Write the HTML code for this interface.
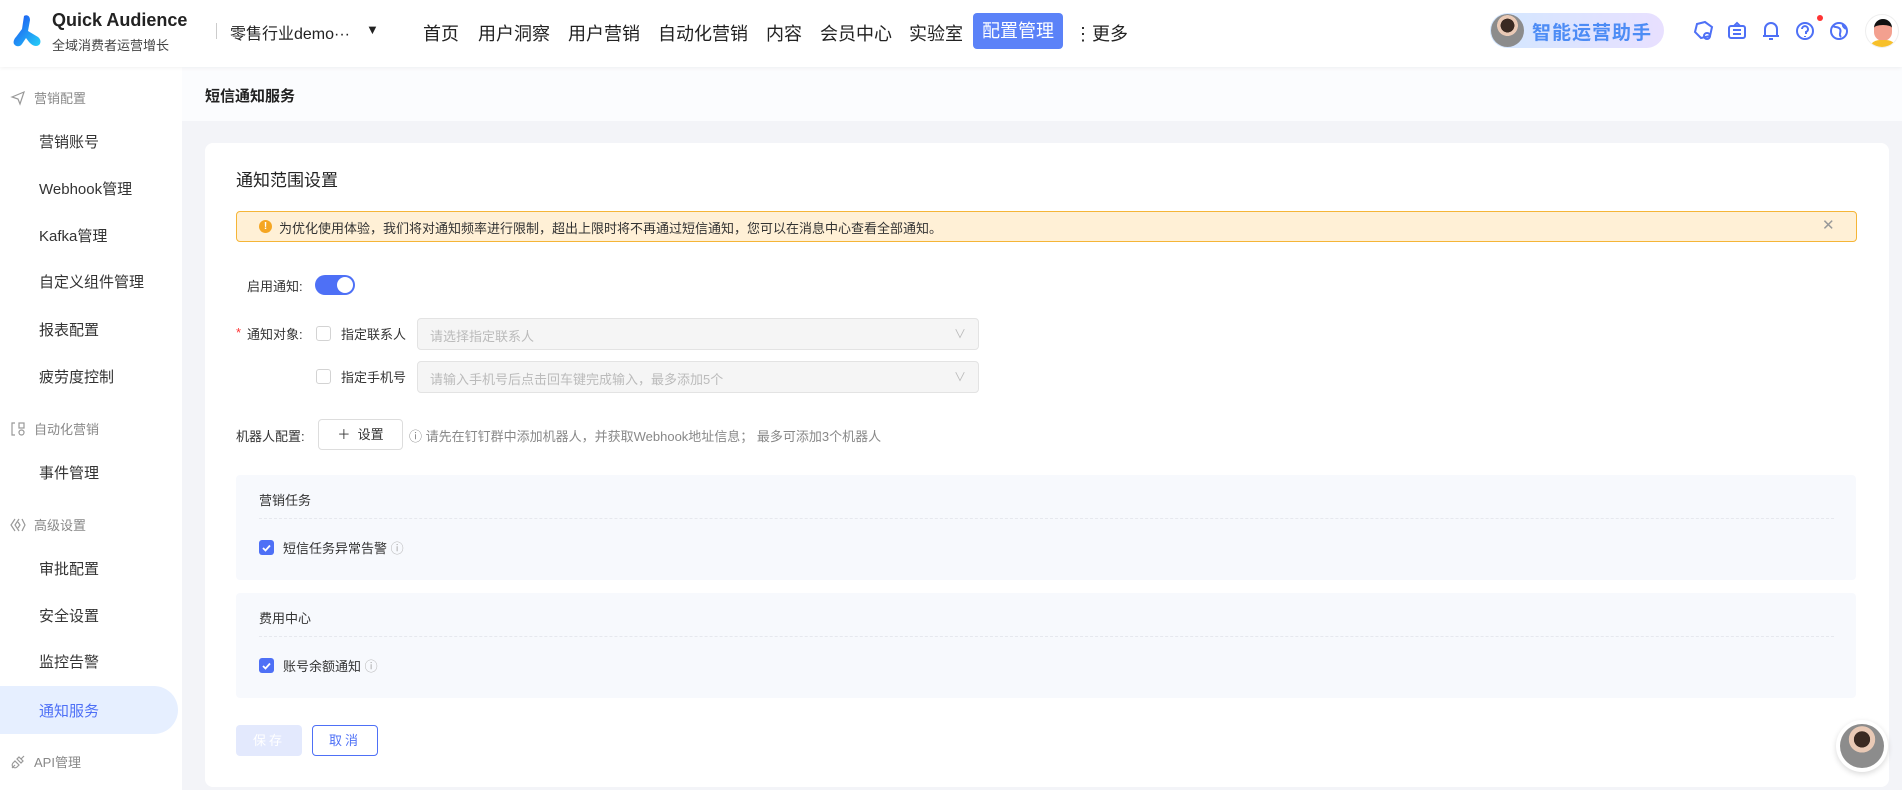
<!DOCTYPE html>
<html><head><meta charset="utf-8">
<style>
*{box-sizing:border-box;margin:0;padding:0}
body{width:1902px;height:790px;overflow:hidden;background:#f3f4f8;font-family:"Liberation Sans","Noto Sans CJK SC",sans-serif;color:#333;position:relative}
.abs{position:absolute}
.hdr{left:0;top:0;width:1902px;height:67px;background:#fff;box-shadow:0 1px 4px rgba(0,0,0,.06);z-index:2}
.nav{top:20px;font-size:18px;color:#222;white-space:nowrap}
.side{left:0;top:67px;width:182px;height:723px;background:#fff}
.grp{left:34px;font-size:13px;color:#888}
.gi{left:10px;width:16px;height:16px}
.it{left:39px;font-size:15px;color:#333}
.lbl{font-size:13px;color:#333}
.cb{width:15px;height:15px;border:1px solid #d3d3d3;border-radius:3px;background:#fff}
.cbon{width:15px;height:15px;border-radius:3px;background:#4e70f6}
.inp{left:417px;width:562px;height:32px;background:#f5f5f5;border:1px solid #e3e3e3;border-radius:4px;font-size:13px;color:#bbb;padding:7px 12px}
.inp span{position:absolute;right:12px;top:6px;color:#bbb;font-size:12px}
.sec{left:236px;width:1620px;height:105px;background:#f7f9fd;border-radius:4px}
</style></head><body>
<div class="abs hdr">
  <svg class="abs" style="left:10px;top:14px" width="33" height="33" viewBox="0 0 33 33"><defs><linearGradient id="g" x1="0" y1="0" x2="1" y2="1"><stop offset="0" stop-color="#1c4df2"/><stop offset="1" stop-color="#25d0f7"/></linearGradient></defs><path d="M14 2c3-2 6 0 6 4l-2 11 10 6c4 3 3 9-2 9-3 0-5-2-7-4l-3-4-4 6c-2 3-6 3-8 0-1-2 0-5 2-7l6-8z" fill="url(#g)"/></svg>
  <div class="abs" style="left:52px;top:10px;font-size:18px;font-weight:bold;color:#222">Quick Audience</div>
  <div class="abs" style="left:52px;top:35px;font-size:13px;color:#444">全域消费者运营增长</div>
  <div class="abs" style="left:216px;top:23px;width:1px;height:16px;background:#ccc"></div>
  <div class="abs" style="left:230px;top:20px;font-size:16px;color:#222">零售行业demo···</div>
  <div class="abs" style="left:366px;top:22px;font-size:13px;color:#222">▼</div>
  <div class="abs nav" style="left:423px">首页</div>
  <div class="abs nav" style="left:478px">用户洞察</div>
  <div class="abs nav" style="left:568px">用户营销</div>
  <div class="abs nav" style="left:658px">自动化营销</div>
  <div class="abs nav" style="left:766px">内容</div>
  <div class="abs nav" style="left:820px">会员中心</div>
  <div class="abs nav" style="left:909px">实验室</div>
  <div class="abs" style="left:973px;top:13px;width:90px;height:36px;background:#5b82f8;border-radius:4px;color:#fff;font-size:18px;text-align:center;line-height:36px">配置管理</div>
  <div class="abs nav" style="left:1074px">⋮更多</div>
  <div class="abs" style="left:1490px;top:13px;width:174px;height:35px;border-radius:18px;background:linear-gradient(90deg,#d3e7ff,#e8e0ff)"></div>
  <div class="abs" style="left:1491px;top:14px;width:33px;height:33px;border-radius:50%;background:radial-gradient(circle at 50% 35%,#3a2a22 0 25%,#e9c9b5 26% 38%,#8c8c8c 39% 100%)"></div>
  <div class="abs" style="left:1532px;top:18px;font-size:19px;font-weight:bold;color:#4d8cf5;letter-spacing:1px">智能运营助手</div>
  <svg class="abs" style="left:1693px;top:20px" width="170" height="22" viewBox="0 0 170 22" fill="none" stroke="#4e70f6" stroke-width="2">
    <path d="M4 4l8-2 7 5-2 9-9 2-6-6z"/><circle cx="14" cy="16" r="3"/>
    <rect x="36" y="6" width="16" height="12" rx="2"/><path d="M40 10h8M40 14h8M41 6l3-3 3 3"/>
    <path d="M72 16V9a6 6 0 0 1 12 0v7zM70 16h16M76 19h4"/>
    <circle cx="112" cy="11" r="8"/><path d="M109 9a3 3 0 1 1 4 3v2M112 16v1"/>
    <circle cx="146" cy="11" r="8"/><path d="M140 6c3 2 5 0 7 3s-2 5 1 8M150 4c-1 3 2 4 3 5"/>
  </svg>
  <div class="abs" style="left:1817px;top:15px;width:6px;height:6px;border-radius:50%;background:#f33"></div>
  <div class="abs" style="left:1865px;top:14px;width:34px;height:34px;border-radius:50%;overflow:hidden;background:#fff;border:1px solid #eee">
    <div class="abs" style="left:8px;top:4px;width:18px;height:22px;border-radius:9px;background:#f3a08f;border-top:6px solid #111"></div>
    <div class="abs" style="left:2px;top:25px;width:30px;height:14px;border-radius:12px 12px 0 0;background:#f7c02b"></div>
  </div>
</div>

<div class="abs side">
  <svg class="abs gi" style="top:23px" viewBox="0 0 16 16" fill="none" stroke="#999" stroke-width="1.2"><path d="M2 7l12-5-4 12-2-5z"/></svg>
  <div class="abs grp" style="top:21px">营销配置</div>
  <div class="abs it" style="top:64px">营销账号</div>
  <div class="abs it" style="top:111px">Webhook管理</div>
  <div class="abs it" style="top:158px">Kafka管理</div>
  <div class="abs it" style="top:204px">自定义组件管理</div>
  <div class="abs it" style="top:252px">报表配置</div>
  <div class="abs it" style="top:299px">疲劳度控制</div>
  <svg class="abs gi" style="top:354px" viewBox="0 0 16 16" fill="none" stroke="#999" stroke-width="1.2"><path d="M5 2H2v12h3"/><rect x="9" y="2" width="5" height="5"/><circle cx="11.5" cy="11.5" r="2.5"/></svg>
  <div class="abs grp" style="top:352px">自动化营销</div>
  <div class="abs it" style="top:395px">事件管理</div>
  <svg class="abs gi" style="top:450px" viewBox="0 0 16 16" fill="none" stroke="#999" stroke-width="1.2"><path d="M5 2L1 8l4 6M9 2l-4 6 4 6M12 2l3 6-3 6M8 5l2 3-2 3"/></svg>
  <div class="abs grp" style="top:448px">高级设置</div>
  <div class="abs it" style="top:491px">审批配置</div>
  <div class="abs it" style="top:538px">安全设置</div>
  <div class="abs it" style="top:584px">监控告警</div>
  <div class="abs" style="left:0;top:619px;width:178px;height:48px;background:#e6efff;border-radius:0 24px 24px 0"></div>
  <div class="abs it" style="top:633px;color:#4e70f6">通知服务</div>
  <svg class="abs gi" style="top:687px" viewBox="0 0 16 16" fill="none" stroke="#999" stroke-width="1.2"><path d="M2 14l3-3M11 5l3-3M5 7l4 4-2 2a2.8 2.8 0 0 1-4-4zM9 3l4 4-2 2-4-4z"/></svg>
  <div class="abs grp" style="top:685px">API管理</div>
</div>

<div class="abs" style="left:182px;top:67px;width:1720px;height:54px;background:#fbfcfe"></div>
<div class="abs" style="left:205px;top:85px;font-size:15px;font-weight:bold;color:#222">短信通知服务</div>

<div class="abs" style="left:205px;top:143px;width:1684px;height:644px;background:#fff;border-radius:8px"></div>
<div class="abs" style="left:236px;top:166px;font-size:17px;color:#222">通知范围设置</div>
<div class="abs" style="left:236px;top:211px;width:1621px;height:31px;background:#fff0d6;border:1px solid #f5b537;border-radius:4px"></div>
<div class="abs" style="left:259px;top:220px;width:13px;height:13px;border-radius:50%;background:#f5a623;color:#fff;font-size:10px;font-weight:bold;text-align:center;line-height:13px">!</div>
<div class="abs" style="left:279px;top:218px;font-size:13px;color:#333">为优化使用体验，我们将对通知频率进行限制，超出上限时将不再通过短信通知，您可以在消息中心查看全部通知。</div>
<div class="abs" style="left:1822px;top:216px;font-size:15px;color:#999">✕</div>

<div class="abs lbl" style="left:247px;top:276px">启用通知:</div>
<div class="abs" style="left:315px;top:275px;width:40px;height:20px;border-radius:10px;background:#4e70f6"></div>
<div class="abs" style="left:337px;top:277px;width:16px;height:16px;border-radius:50%;background:#fff"></div>

<div class="abs" style="left:236px;top:325px;font-size:13px;color:#f33">*</div>
<div class="abs lbl" style="left:247px;top:324px">通知对象:</div>
<div class="abs cb" style="left:316px;top:326px"></div>
<div class="abs lbl" style="left:341px;top:324px">指定联系人</div>
<div class="abs inp" style="top:318px">请选择指定联系人<span>∨</span></div>
<div class="abs cb" style="left:316px;top:369px"></div>
<div class="abs lbl" style="left:341px;top:367px">指定手机号</div>
<div class="abs inp" style="top:361px">请输入手机号后点击回车键完成输入，最多添加5个<span>∨</span></div>

<div class="abs lbl" style="left:236px;top:426px">机器人配置:</div>
<div class="abs" style="left:318px;top:419px;width:85px;height:31px;border:1px solid #ddd;border-radius:4px;font-size:13px;text-align:center;line-height:29px;color:#333">＋&nbsp;&nbsp;设置</div>
<div class="abs" style="left:409px;top:426px;font-size:13px;color:#888">ⓘ 请先在钉钉群中添加机器人，并获取Webhook地址信息； 最多可添加3个机器人</div>

<div class="abs sec" style="top:475px"></div>
<div class="abs lbl" style="left:259px;top:490px">营销任务</div>
<div class="abs" style="left:259px;top:518px;width:1575px;border-top:1px dashed #e6e8ee"></div>
<div class="abs cbon" style="left:259px;top:540px"></div>
<svg class="abs" style="left:259px;top:540px" width="15" height="15"><path d="M4 8l2.5 2.5L11 5.5" stroke="#fff" stroke-width="1.8" fill="none"/></svg>
<div class="abs lbl" style="left:283px;top:538px">短信任务异常告警 <span style="color:#aaa">ⓘ</span></div>

<div class="abs sec" style="top:593px"></div>
<div class="abs lbl" style="left:259px;top:608px">费用中心</div>
<div class="abs" style="left:259px;top:636px;width:1575px;border-top:1px dashed #e6e8ee"></div>
<div class="abs cbon" style="left:259px;top:658px"></div>
<svg class="abs" style="left:259px;top:658px" width="15" height="15"><path d="M4 8l2.5 2.5L11 5.5" stroke="#fff" stroke-width="1.8" fill="none"/></svg>
<div class="abs lbl" style="left:283px;top:656px">账号余额通知 <span style="color:#aaa">ⓘ</span></div>

<div class="abs" style="left:236px;top:725px;width:66px;height:31px;background:#e3e9fd;border-radius:4px;color:#fff;font-size:13px;text-align:center;line-height:31px;letter-spacing:3px">保存</div>
<div class="abs" style="left:312px;top:725px;width:66px;height:31px;border:1px solid #4e70f6;border-radius:4px;color:#4e70f6;font-size:13px;text-align:center;line-height:29px;letter-spacing:3px">取消</div>

<div class="abs" style="left:1836px;top:720px;width:52px;height:52px;border-radius:50%;background:#fff;box-shadow:0 2px 6px rgba(0,0,0,.15)"></div>
<div class="abs" style="left:1840px;top:724px;width:44px;height:44px;border-radius:50%;background:radial-gradient(circle at 50% 35%,#3a2a22 0 22%,#e9c9b5 23% 36%,#8c8c8c 37% 100%)"></div>
</body></html>
